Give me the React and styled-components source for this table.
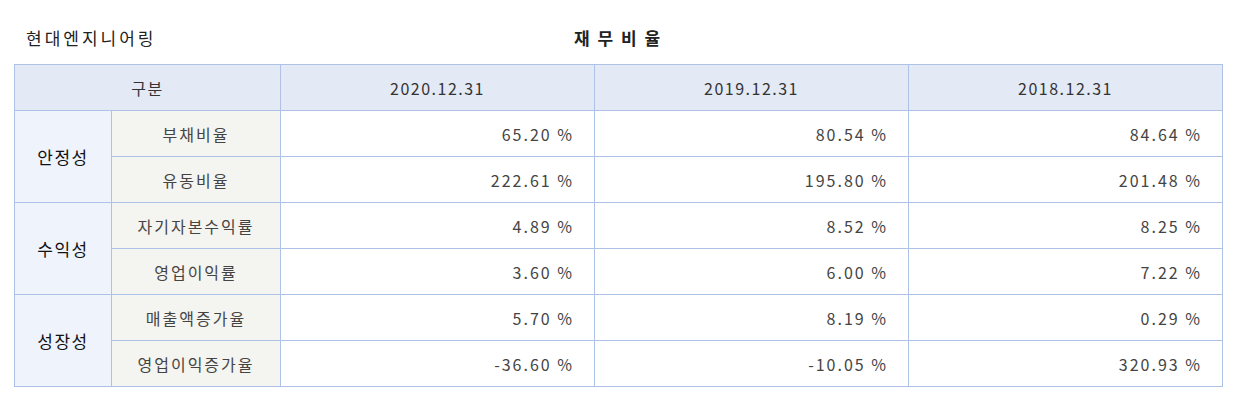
import React from 'react'
import styled, { createGlobalStyle } from 'styled-components'

const GlobalStyle = createGlobalStyle`
  body {
    margin: 0;
    background: #fff;
    font-family: "Noto Sans CJK KR", "Noto Sans", sans-serif;
    color: #333;
  }
`

const Page = styled.div`
  width: 1237px;
  padding: 0 15px 0 14px;
  box-sizing: border-box;
`

const TitleBar = styled.div`
  height: 64px;
  padding-top: 10px;
  box-sizing: border-box;
  display: grid;
  grid-template-columns: 1fr auto 1fr;
  align-items: center;
`

const Company = styled.h2`
  margin: 0 0 0 12px;
  font-size: 17px;
  font-weight: 400;
  letter-spacing: 3px;
  color: #222;
`

const Heading = styled.h1`
  margin: 0;
  font-size: 17px;
  font-weight: 700;
  letter-spacing: 2px;
  color: #222;
`

const Table = styled.table`
  width: 1209px;
  border-collapse: collapse;
  table-layout: fixed;
  font-size: 16px;
  line-height: 1;
  letter-spacing: 1.5px;
`

const Th = styled.th`
  height: 45px;
  padding: 0;
  background: #e3e9f5;
  border: 1px solid #aec2e8;
  font-weight: 400;
  color: #333;
`

const Group = styled.td`
  padding: 0;
  background: #eff3fc;
  border: 1px solid #aec2e8;
  text-align: center;
  font-size: 17px;
  font-weight: 400;
  color: #111;
`

const Item = styled.td`
  padding: 0;
  background: #f4f4f0;
  border: 1px solid #aec2e8;
  text-align: center;
  letter-spacing: 2px;
  color: #444;
`

const Value = styled.td`
  height: 45px;
  padding: 0 20px 0 0;
  border: 1px solid #aec2e8;
  text-align: right;
  letter-spacing: 2px;
  color: #444;
`

const years = ['2020.12.31', '2019.12.31', '2018.12.31']

const groups = [
  {
    name: '안정성',
    rows: [
      ['부채비율', '65.20 %', '80.54 %', '84.64 %'],
      ['유동비율', '222.61 %', '195.80 %', '201.48 %'],
    ],
  },
  {
    name: '수익성',
    rows: [
      ['자기자본수익률', '4.89 %', '8.52 %', '8.25 %'],
      ['영업이익률', '3.60 %', '6.00 %', '7.22 %'],
    ],
  },
  {
    name: '성장성',
    rows: [
      ['매출액증가율', '5.70 %', '8.19 %', '0.29 %'],
      ['영업이익증가율', '-36.60 %', '-10.05 %', '320.93 %'],
    ],
  },
]

const App = () => {
  return (
    <Page>
      <GlobalStyle />
      <TitleBar>
        <Company>현대엔지니어링</Company>
        <Heading>재 무 비 율</Heading>
        <span />
      </TitleBar>
      <Table>
        <colgroup>
          <col style={{ width: 97 }} />
          <col style={{ width: 169 }} />
          <col style={{ width: 314 }} />
          <col style={{ width: 314 }} />
          <col style={{ width: 314 }} />
        </colgroup>
        <thead>
          <tr>
            <Th colSpan={2}>구분</Th>
            {years.map((y) => (
              <Th key={y}>{y}</Th>
            ))}
          </tr>
        </thead>
        <tbody>
          {groups.map((g) =>
            g.rows.map((r, i) => (
              <tr key={r[0]}>
                {i === 0 && <Group rowSpan={g.rows.length}>{g.name}</Group>}
                <Item>{r[0]}</Item>
                {r.slice(1).map((v, j) => (
                  <Value key={j}>{v}</Value>
                ))}
              </tr>
            ))
          )}
        </tbody>
      </Table>
    </Page>
  )
}

export default App
